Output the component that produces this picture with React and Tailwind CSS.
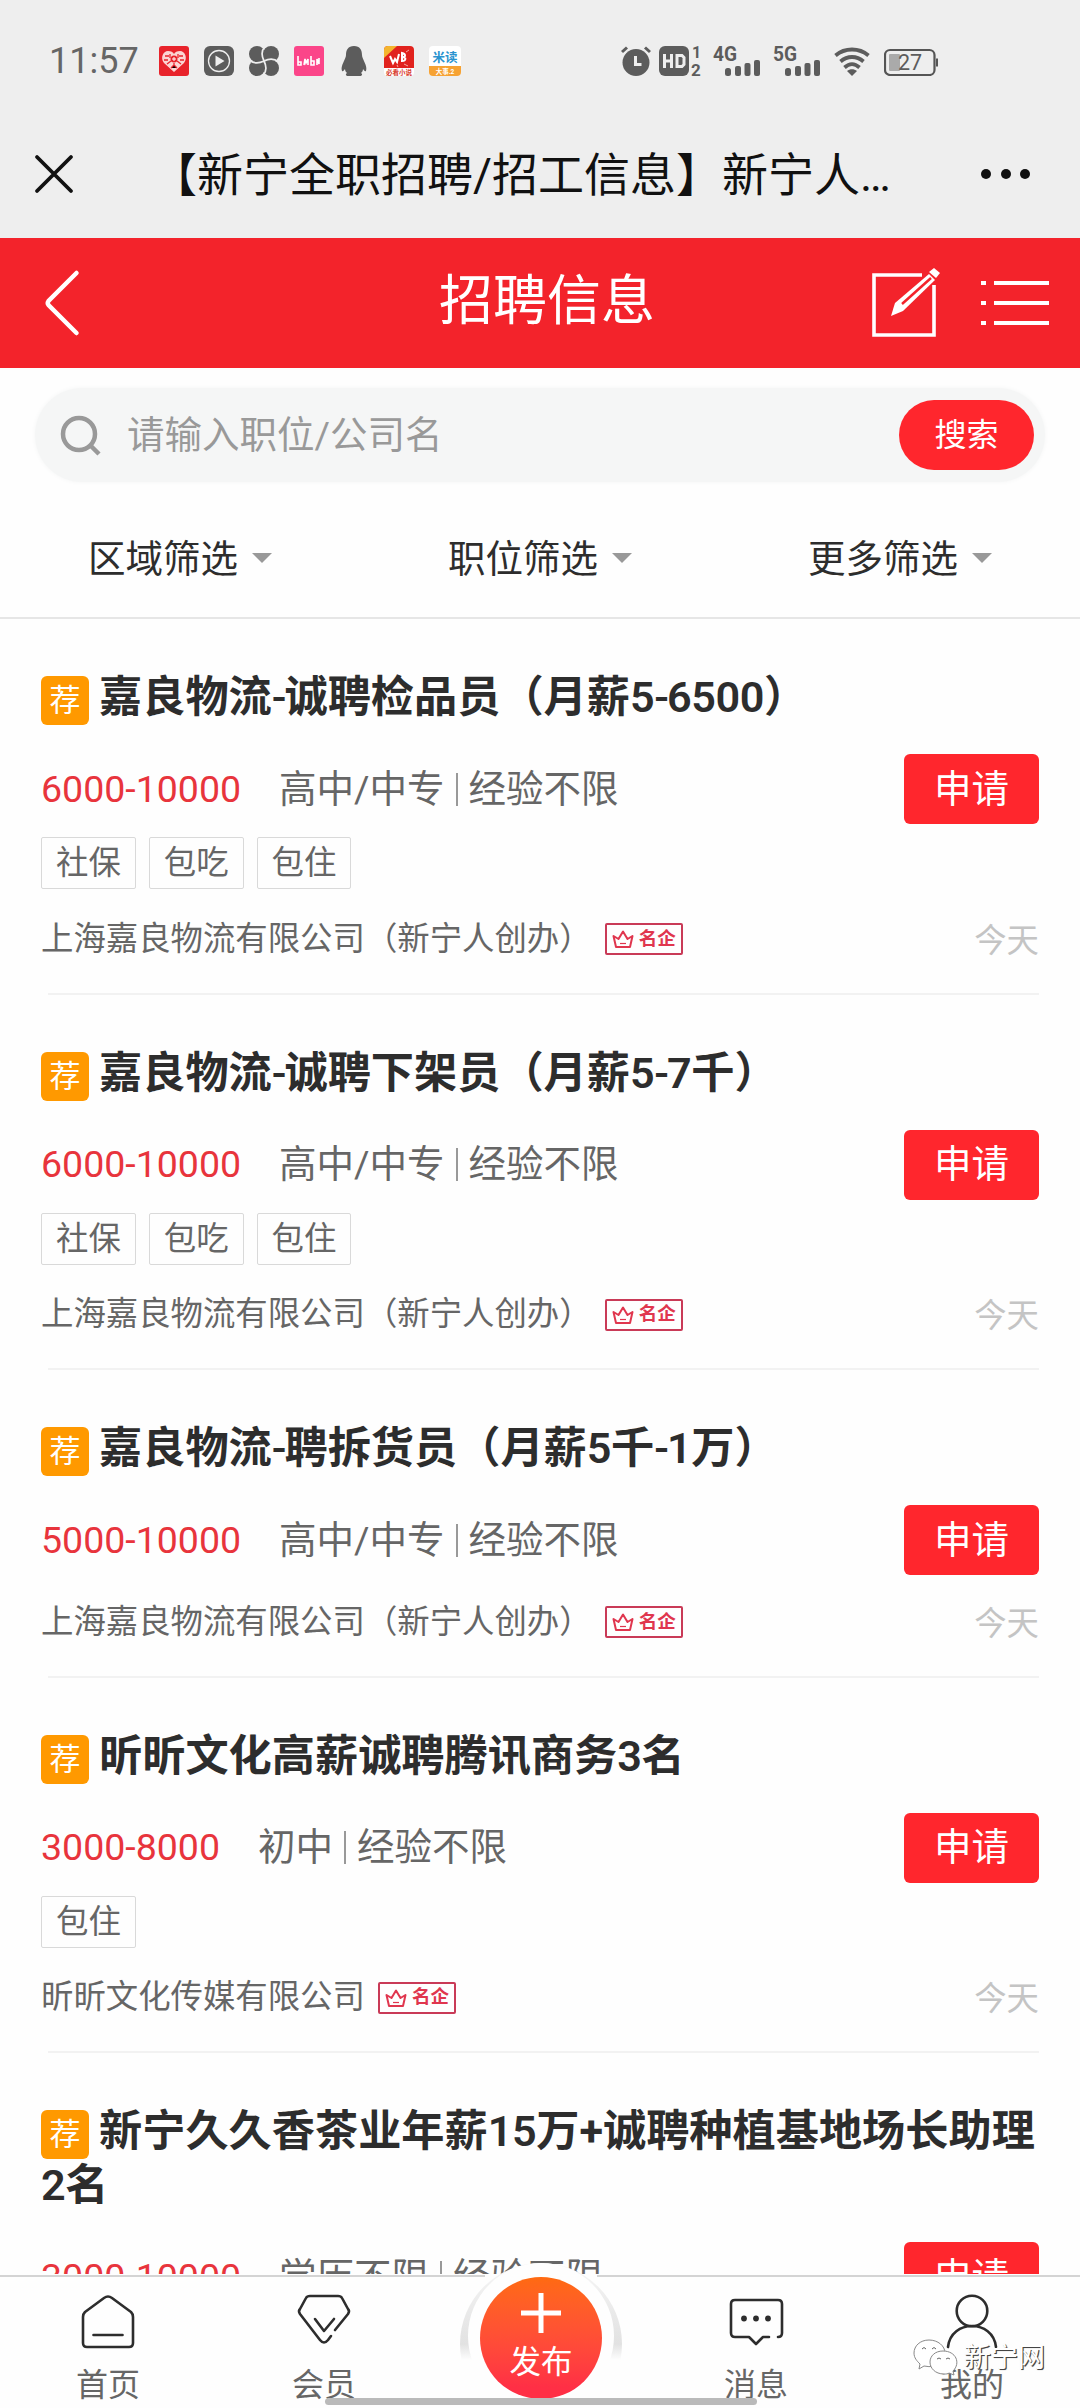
import React from "react";

const jobs = [
  {
    title: "嘉良物流-诚聘检品员（月薪5-6500）",
    salary: "6000-10000",
    education: "高中/中专",
    tags: ["社保", "包吃", "包住"],
    company: "上海嘉良物流有限公司（新宁人创办）",
  },
  {
    title: "嘉良物流-诚聘下架员（月薪5-7千）",
    salary: "6000-10000",
    education: "高中/中专",
    tags: ["社保", "包吃", "包住"],
    company: "上海嘉良物流有限公司（新宁人创办）",
  },
  {
    title: "嘉良物流-聘拆货员（月薪5千-1万）",
    salary: "5000-10000",
    education: "高中/中专",
    tags: [],
    company: "上海嘉良物流有限公司（新宁人创办）",
  },
  {
    title: "昕昕文化高薪诚聘腾讯商务3名",
    salary: "3000-8000",
    education: "初中",
    tags: ["包住"],
    company: "昕昕文化传媒有限公司",
  },
  {
    title: "新宁久久香茶业年薪15万+诚聘种植基地场长助理2名",
    salary: "3000-10000",
    education: "学历不限",
    tags: [],
  },
];

const filters = ["区域筛选", "职位筛选", "更多筛选"];

function AppIcons() {
  return (
    <div className="ml-[20px] flex items-center gap-[15px]">
      {/* Heart app */}
      <svg className="size-[30px]" viewBox="0 0 30 30">
        <rect width="30" height="30" rx="3" fill="#e8232b" />
        <path d="M15 26 5 17C1 12 4 5 9 5c3 0 5 1 6 3 1-2 3-3 6-3 5 0 8 7 4 12Z" fill="#fbd5d3" />
        <path d="M6 10h4M5 14h4M8 18l4-3M11 8v4M20 10h4M21 14h4M22 18l-4-3M19 8v4M12 22l3-3 3 3M15 17v3" stroke="#e8232b" strokeWidth="1.3" />
        <circle cx="15" cy="13" r="3.5" fill="#e8232b" />
        <path d="M13 13h4M15 11v4" stroke="#fff" />
      </svg>
      {/* Player */}
      <svg className="size-[30px]" viewBox="0 0 30 30">
        <rect width="30" height="30" rx="6" fill="#5c5c5c" />
        <circle cx="15" cy="15" r="10.5" fill="none" stroke="#eee" strokeWidth="1.3" />
        <path d="M11.500 9.500v11l9-5.500Z" fill="#eee" />
      </svg>
      {/* Pinwheel */}
      <svg className="size-[30px]" viewBox="0 0 30 30">
        <g fill="#5c5c5c">
          <circle cx="8" cy="8" r="8" />
          <circle cx="22" cy="8" r="8" />
          <circle cx="22" cy="22" r="8" />
          <circle cx="8" cy="22" r="8" />
          <rect x="8" y="8" width="14" height="14" />
        </g>
        <path d="M16.500 0c-4 4-4.500 9-1.500 15 3 6 2.500 11-1.500 15M0 13.500c4 4 9 4.500 15 1.500 6-3 11-2.500 15 1.500" fill="none" stroke="#eee" strokeWidth="1.700" />
      </svg>
      {/* Pink app */}
      <svg className="size-[30px]" viewBox="0 0 30 30">
        <rect width="30" height="30" rx="3" fill="#fb4589" />
        <path d="M4 10v9h3v-3H4m6 3 1-6 1 4 2-4v6m3-9v9h3v-4h-3m6 4v-6l2 5v-6" fill="none" stroke="#fff" strokeWidth="1.600" />
      </svg>
      {/* Penguin */}
      <svg className="size-[30px]" viewBox="0 0 30 30">
        <path d="M15 0C9 0 7 4 7 9c0 4-6 11-4 16 1 1 2-1 3-2 0 2 1 3 2 4-2 1-1 3 1 3h12c2 0 3-2 1-3 1-1 2-2 2-4 1 1 2 3 3 2 2-5-4-12-4-16 0-5-2-9-8-9Z" fill="#5c5c5c" />
      </svg>
      {/* Novel app */}
      <svg className="size-[30px]" viewBox="0 0 30 30">
        <rect width="30" height="30" rx="4" fill="#fff" />
        <path d="M4 0h22a4 4 0 0 1 4 4v18H0V4a4 4 0 0 1 4-4Z" fill="#e1221d" />
        <path d="M4 0h9L0 12V4a4 4 0 0 1 4-4Z" fill="#f4b52e" />
        <path d="m6 10 3 7 2-4 2 3 2-8m3 8V7c4 1 4 4 0 4 5 0 4 4 0 4" fill="none" stroke="#fff" strokeWidth="2" />
        <path d="m20 18 4 2M13 19l1 2M22 6l3-2" stroke="#f7a9a0" />
        <text x="15" y="28.500" textAnchor="middle" fontSize="6.500" fontWeight="700" fill="#d83a2c">
          必看小说
        </text>
      </svg>
      {/* Reader app */}
      <svg className="h-[30px] w-[32px]" viewBox="0 0 32 30">
        <rect width="32" height="30" rx="4" fill="#fff" />
        <text x="16" y="16" textAnchor="middle" fontSize="12.500" fontWeight="700" fill="#2a93cf">
          米读
        </text>
        <path d="M0 20h32v6a4 4 0 0 1-4 4H4a4 4 0 0 1-4-4Z" fill="#f6a233" />
        <text x="16" y="27.500" textAnchor="middle" fontSize="6.500" fontWeight="700" fill="#fff">
          大事.2
        </text>
      </svg>
    </div>
  );
}

function Signal({ label }) {
  return (
    <svg className="h-[30px] w-[48px] overflow-visible" viewBox="0 0 48 30">
      <text x="0" y="14.500" fontSize="20" fontWeight="700" fill="#5c5c5c" textLength="24" lengthAdjust="spacingAndGlyphs">
        {label}
      </text>
      <g fill="#5c5c5c">
        <rect x="12" y="22" width="6" height="8" rx="2.500" />
        <rect x="22" y="20" width="6" height="10" rx="2" />
        <rect x="31.500" y="17" width="6" height="13" rx="2" />
        <rect x="41" y="14" width="6" height="16" rx="2" />
      </g>
    </svg>
  );
}

function StatusBar() {
  return (
    <div className="flex h-[122px] items-center pl-[49px] text-[#666]">
      <span className="w-[90px] text-[36px] leading-none">11:57</span>
      <AppIcons />
      <div className="ml-[160px] flex items-center">
        <svg className="h-[30px] w-[30px]" viewBox="0 0 30 30">
          <circle cx="15" cy="16.500" r="13.500" fill="#5c5c5c" />
          <path d="m1 6 5-4.500M29 6l-5-4.500" stroke="#5c5c5c" strokeWidth="3" />
          <path d="M14.500 10v8.500h6" fill="none" stroke="#eee" strokeWidth="3" />
        </svg>
        <svg className="ml-[8px] h-[30px] w-[44px] overflow-visible" viewBox="0 0 44 30">
          <rect width="30" height="30" rx="6" fill="#5c5c5c" />
          <path d="M5.500 8v14M12.500 8v14M5.500 15h7M18 9.500v11h5l2-2v-7l-2-2Z" fill="none" stroke="#eee" strokeWidth="3" />
          <text x="33" y="12" fontSize="16" fontWeight="700" fill="#5c5c5c">1</text>
          <text x="32" y="30" fontSize="17" fontWeight="700" fill="#5c5c5c">2</text>
        </svg>
        <div className="ml-[10px] flex gap-[12px]">
          <Signal label="4G" />
          <Signal label="5G" />
        </div>
        <svg className="ml-[13px] h-[30px] w-[36px]" viewBox="0 0 36 30">
          <g fill="none" stroke="#5c5c5c" strokeWidth="3.800">
            <path d="M1.500 9.500c9.500-8 23.500-8 33 0" />
            <path d="M6.500 15.500c7-6 16-6 23 0" />
            <path d="M10.500 21.500c5-4.500 10-4.500 15 0" />
          </g>
          <path d="M13 25c3-2.500 7-2.500 10 0l-5 5Z" fill="#5c5c5c" />
        </svg>
        <svg className="ml-[14px] h-[30px] w-[56px]" viewBox="0 0 56 30">
          <rect x="1" y="4" width="49.500" height="25" rx="5" fill="none" stroke="#555" strokeWidth="2.200" />
          <rect x="5" y="8" width="11" height="17" rx="1" fill="#aaa" />
          <path d="M53 12.500v8" stroke="#555" strokeWidth="2" />
          <text x="14" y="24" fontSize="21.500" fill="#5c5c5c">27</text>
        </svg>
      </div>
    </div>
  );
}

function BrowserTitle() {
  return (
    <div className="flex h-[116px] items-center text-[#111]">
      <svg className="mb-[12px] ml-[34px] size-[40px]" viewBox="0 0 40 40">
        <path d="m3 3 34 34M37 3 3 37" stroke="#111" strokeWidth="3.800" strokeLinecap="round" />
      </svg>
      <h1 className="mb-[10px] ml-[77px] w-[770px] text-[46px] leading-[60px] whitespace-nowrap">
        【新宁全职招聘/招工信息】新宁人…
      </h1>
      <div className="mb-[13px] ml-[60px] flex gap-[9.500px]">
        <span className="size-[10px] rounded-full bg-[#111]" />
        <span className="size-[10px] rounded-full bg-[#111]" />
        <span className="size-[10px] rounded-full bg-[#111]" />
      </div>
    </div>
  );
}

function PageHeader() {
  return (
    <header className="flex h-[130px] items-center bg-[#f3232b] text-white">
      <div className="w-[220px] pl-[44px]">
        <svg className="h-[68px] w-[36px]" viewBox="0 0 36 68">
          <path d="M32.500 4 4.500 32q-1.500 2 0 4l28 28" fill="none" stroke="#fff" strokeWidth="4.500" strokeLinecap="round" />
        </svg>
      </div>
      <h2 className="mb-[2px] flex-1 text-center text-[54px] leading-[70px]">招聘信息</h2>
      <div className="flex w-[206px] items-center">
        <svg className="ml-[-2px] h-[74px] w-[70px]" viewBox="0 0 70 74">
          <path d="M50 9H2v60h60V19" fill="none" stroke="#fff" strokeWidth="3.600" />
          <path d="m19 50 4-13 34-29 6 6-32 31Z" fill="#fff" />
          <path d="m30 38 29-26" stroke="#f3232b" strokeWidth="2.500" />
          <path d="m62 2 6 5-4 5-7-6Z" fill="#fff" />
        </svg>
        <svg className="ml-[39px] h-[46px] w-[70px]" viewBox="0 0 70 46">
          <path d="M0 3h5M13 3h55M0 23h5M13 23h55M0 43h5M13 43h55" stroke="#fff" strokeWidth="4" />
        </svg>
      </div>
    </header>
  );
}

function SearchBar() {
  return (
    <div className="mx-[35px] mt-[20px] flex h-[94px] items-center rounded-full bg-[#f5f6f6] shadow-[0_0_5px_#f5f6f6]">
      <svg className="ml-[25px] size-[42px]" viewBox="0 0 42 42">
        <circle cx="19" cy="20" r="16" fill="none" stroke="#999" strokeWidth="4.500" />
        <path d="m30 31 9 9" stroke="#999" strokeWidth="4.500" />
      </svg>
      <span className="ml-[25px] flex-1 text-[37.500px] leading-[50px] text-[#999]">
        请输入职位/公司名
      </span>
      <button className="mr-[11px] h-[70px] w-[135px] rounded-full bg-[#ff262d] text-[32px] text-white">
        搜索
      </button>
    </div>
  );
}

function FilterBar() {
  return (
    <div className="grid h-[137px] grid-cols-3 border-b-2 border-[#e6e6e6] pt-[19px]">
      {filters.map((name) => (
        <div key={name} className="flex items-center justify-center gap-[14px] text-[37.500px] text-[#2d2d2d]">
          <span>{name}</span>
          <span className="mt-[-3px] border-x-[10px] border-t-[10px] border-x-transparent border-t-[#999]" />
        </div>
      ))}
    </div>
  );
}

function FamousBadge() {
  return (
    <span className="ml-[13px] flex h-[32px] w-[78px] items-center justify-center gap-[5px] rounded-[2px] border-2 border-[#c93a57] text-[#e0364e]">
      <svg className="h-[20px] w-[22px]" viewBox="0 0 22 20">
        <path d="m1.500 7 2.500 11h14l2.500-11-5 3L11 2.500 6.500 10Z" fill="none" stroke="currentColor" strokeWidth="2" strokeLinejoin="round" />
        <path d="M8 14.500h6" stroke="currentColor" strokeWidth="1.200" />
      </svg>
      <span className="text-[18.500px] leading-none font-bold">名企</span>
    </span>
  );
}

// Latin digits and hyphens sit lighter and tighter than the bold Chinese text
function JobTitle({ text }) {
  return text.split(/(-|\d+)/).map((part, i) => {
    if (part === "-") return <span key={i} className="font-medium tracking-[-2px]">-</span>;
    if (/^\d+$/.test(part)) return <span key={i} className="font-semibold tracking-[-0.4px]">{part}</span>;
    return part;
  });
}

function JobCard({ job }) {
  return (
    <article className="px-[41px] pt-[52px]">
      <h3 className="text-[43.200px] leading-[54px] font-bold text-[#2d2d2d]">
        <span className="mt-[5px] mr-[10px] inline-flex h-[49px] w-[48px] items-center justify-center rounded-[6px] bg-[#ff9900] align-top text-[31px] leading-none font-normal text-white">
          荐
        </span>
        <JobTitle text={job.title} />
      </h3>
      <div className="mt-[29px] flex h-[70px] items-center text-[37.500px] text-[#666]">
        <span className="text-[#e8343c]">{job.salary}</span>
        <span className="ml-[38px]">{job.education}</span>
        <span className="mx-[11px] h-[33px] w-[2px] bg-[#999]" />
        <span>经验不限</span>
        <button className="ml-auto h-[70px] w-[135px] rounded-[6px] bg-[#ff262d] text-white">
          申请
        </button>
      </div>
      {job.tags.length > 0 && (
        <div className="mt-[13px] mb-[27px] flex h-[52px] gap-[13px] text-[32.400px] leading-[50px] text-[#666]">
          {job.tags.map((tag) => (
            <span key={tag} className="rounded-[2px] border border-[#d9d9d9] px-[14px]">
              {tag}
            </span>
          ))}
        </div>
      )}
      {job.tags.length === 0 && <div className="h-[24px]" />}
      {job.company && (
        <div className="flex h-[46px] items-center text-[32.400px] text-[#666]">
          <span>{job.company}</span>
          <FamousBadge />
          <span className="ml-auto pt-[4px] text-[#c4c4c4]">今天</span>
        </div>
      )}
      <div className="mt-[30.500px] ml-[7px] h-[2px] bg-[#f2f2f2]" />
    </article>
  );
}

function NavItem({ label, children }) {
  return (
    <div className="flex w-[216px] flex-col items-center pt-[16px]">
      <svg className="h-[60px] w-[60px]" viewBox="0 0 60 60" fill="none" stroke="#2d2d2d" strokeWidth="2.600" strokeLinecap="round" strokeLinejoin="round">
        {children}
      </svg>
      <span className="mt-[11px] text-[32px] leading-[48px] text-[#666]">{label}</span>
    </div>
  );
}

function TabBar() {
  return (
    <nav className="relative h-[134px] bg-[#fefefe]">
      {/* Raised ring behind the publish button */}
      <div className="absolute top-[-11px] left-[460px] size-[162px] rounded-full bg-gradient-to-b from-[#f6f6f6] via-[#e2e2e2] to-[#fefefe] to-60%" />
      <div className="absolute top-[-11px] left-[468px] size-[146px] rounded-full bg-[#fefefe]" />
      <div className="absolute inset-x-0 top-[1px] flex">
        <div className="h-[2px] w-[485px] bg-[#d4d4d4]" />
        <div className="ml-[112px] h-[2px] flex-1 bg-[#d4d4d4]" />
      </div>

      <div className="relative flex">
        <NavItem label="首页">
          <path d="M5 27q0-3 2-5L26 8q4-3 8 0l19 14q2 2 2 5v26q0 4-4 4H9q-4 0-4-4Z" />
          <path d="M15.500 45h29" />
        </NavItem>
        <NavItem label="会员">
          <path d="M41 40 54 24q2-3 0-5l-6-11q-1-2-4-2H16q-3 0-4 2L6 19q-2 2 0 5l20 26q4 5 8 0l3-4" />
          <path d="m21 29 9 12 10-12" />
        </NavItem>
        <div className="flex w-[216px] justify-center pt-[3px]">
          <button className="ml-[2px] flex size-[122px] flex-col items-center rounded-full bg-gradient-to-b from-[#ff6a10] to-[#ff2f45] to-90% pt-[15px] text-white">
            <svg className="size-[42px]" viewBox="0 0 42 42">
              <path d="M21 1v40M1 21h40" stroke="#fff" strokeWidth="5" />
            </svg>
            <span className="mt-[8px] text-[31.500px] leading-[42px]">发布</span>
          </button>
        </div>
        <NavItem label="消息">
          <path d="M43 47H37l-7 7-7-7H9q-4 0-4-4V14q0-4 4-4h43q4 0 4 4v29q0 4-4 4" />
          <g fill="#2d2d2d" stroke="none">
            <circle cx="18" cy="28.500" r="2.900" />
            <circle cx="30" cy="28.500" r="2.900" />
            <circle cx="42" cy="28.500" r="2.900" />
          </g>
        </NavItem>
        <NavItem label="我的">
          <circle cx="30" cy="21" r="15.300" />
          <path d="M6 57c3-28 45-28 48 0" />
        </NavItem>
      </div>

      <div className="absolute top-[124px] left-[325px] h-[7px] w-[432px] rounded-full bg-[#bababa]" />
      <div className="absolute top-[64px] left-[912px] flex items-center">
        <svg className="h-[40px] w-[47px]" viewBox="0 0 47 40">
          <g fill="#fff" stroke="#888" strokeWidth="1">
            <path d="M17 2C8 2 2 8 2 15c0 5 3 8 6 11l-1 5 5-3c14 3 21-5 21-13C33 8 26 2 17 2Z" />
            <path d="M31 13c-8 0-13 5-13 11s5 12 14 12c2 0 4 0 5-1l5 2-1-4c8-8 3-20-10-20Z" />
          </g>
          <path d="M10 11q2-3 4 0M20 11q2-3 4 0M25 21q2-2 4 0M34 21q2-2 4 0" fill="none" stroke="#666" />
        </svg>
        <span className="ml-[5px] text-[27px] leading-[36px] text-white [text-shadow:1px_1px_0_#444,1px_1px_1px_#777]">
          新宁网
        </span>
      </div>
    </nav>
  );
}

export default function App() {
  return (
    <div className="flex h-[2408px] w-[1080px] flex-col overflow-hidden bg-[#fefefe] font-['Roboto','Noto_Sans_CJK_SC',sans-serif]" lang="zh-CN">
      <div className="h-[238px] shrink-0 bg-[#eee]">
        <StatusBar />
        <BrowserTitle />
      </div>
      <PageHeader />
      <main className="h-[1906px] overflow-hidden">
        <SearchBar />
        <FilterBar />
        {jobs.map((job) => (
          <JobCard key={job.title} job={job} />
        ))}
      </main>
      <TabBar />
    </div>
  );
}
